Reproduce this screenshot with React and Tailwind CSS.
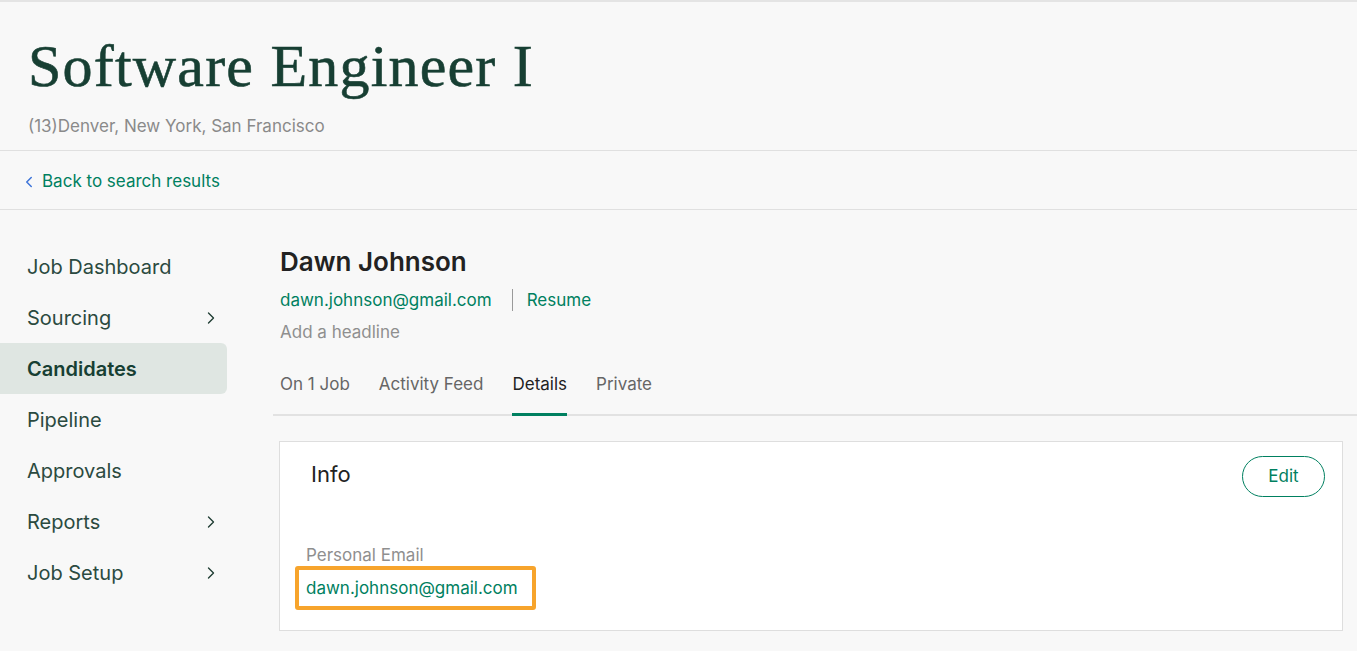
import { ChevronLeft, ChevronRight } from "lucide-react";

const NAV = [
  { label: "Job Dashboard" },
  { label: "Sourcing", arrow: true },
  { label: "Candidates", active: true },
  { label: "Pipeline" },
  { label: "Approvals" },
  { label: "Reports", arrow: true },
  { label: "Job Setup", arrow: true },
];

const TABS = ["On 1 Job", "Activity Feed", "Details", "Private"];

export default function App() {
  return (
    <div
      className="min-h-[651px] bg-[#f8f8f8] border-t-2 border-[#e4e4e4] text-[#222]"
      style={{ fontFamily: "Inter, 'Noto Sans', sans-serif" }}
    >
      <header className="px-[28px] pt-[30px] pb-[12px] border-b border-[#e0e0e0]">
        <h1
          className="text-[60px] leading-[68px] text-[#173f33] tracking-[1.2px] [-webkit-text-stroke:0.6px_#173f33]"
          style={{ fontFamily: "'Liberation Serif', serif" }}
        >
          Software Engineer I
        </h1>
        <p className="mt-[14px] text-[17px] leading-[24px] text-[#8a8a8a]">
          (13)Denver, New York, San Francisco
        </p>
      </header>

      <div className="h-[59px] px-[20px] pt-[3px] flex items-center gap-[4px] border-b border-[#e0e0e0]">
        <ChevronLeft size={18} strokeWidth={2} className="text-[#3d74d9]" />
        <a className="text-[17px] text-[#008060]">Back to search results</a>
      </div>

      <div className="flex">
        <nav className="w-[227px] shrink-0 pt-[31px]">
          {NAV.map((item) => (
            <div
              key={item.label}
              className={`h-[51px] pl-[27px] pr-[6px] flex items-center justify-between text-[20px] rounded-r-[6px] ${
                item.active ? "bg-[#dfe6e2] font-semibold text-[#173f33]" : "text-[#2b4a40]"
              }`}
            >
              <span>{item.label}</span>
              {item.arrow ? <ChevronRight size={20} strokeWidth={1.6} className="text-[#1f3d33]" /> : null}
            </div>
          ))}
        </nav>

        <main className="flex-1 ml-[46px] pt-[35px]">
          <div className="pl-[7px]">
            <h2 className="text-[26px] leading-[34px] font-semibold text-[#222]">Dawn Johnson</h2>
            <div className="mt-[9px] flex items-center text-[17px] leading-[24px] text-[#008060]">
              <span>dawn.johnson@gmail.com</span>
              <span className="ml-[20px] mr-[14px] h-[22px] w-px bg-[#9a9a9a]" />
              <span>Resume</span>
            </div>
            <p className="mt-[8px] text-[17px] leading-[24px] text-[#8f8f8f]">Add a headline</p>
          </div>

          <div className="mt-[28px] flex gap-[29px] pl-[7px] border-b-2 border-[#e2e2e2]">
            {TABS.map((tab) => (
              <div
                key={tab}
                className={`text-[17px] leading-[24px] ${
                  tab === "Details"
                    ? "text-[#222] border-b-[3px] border-[#008060] -mb-[2px] pb-[17px]"
                    : "text-[#666] pb-[18px]"
                }`}
              >
                {tab}
              </div>
            ))}
          </div>

          <section className="mt-[25px] ml-[6px] mr-[14px] h-[190px] bg-white border border-[#dedede]">
            <div className="flex items-start justify-between pl-[31px] pr-[17px] pt-[14px]">
              <h3 className="pt-[4px] text-[22px] leading-[28px] text-[#222]">Info</h3>
              <button
                type="button"
                className="w-[83px] h-[41px] rounded-full border border-[#008060] text-[17px] text-[#008060]"
              >
                Edit
              </button>
            </div>
            <div className="mt-[48px] pl-[15px]">
              <p className="pl-[11px] text-[17px] leading-[20px] text-[#8f8f8f]">Personal Email</p>
              <div className="mt-[1px] inline-block border-4 border-[#f7a42c] rounded-[3px] pl-[7px] pr-[14px] py-[5px]">
                <span className="block text-[17px] leading-[26px] text-[#008060]">dawn.johnson@gmail.com</span>
              </div>
            </div>
          </section>
        </main>
      </div>
    </div>
  );
}
